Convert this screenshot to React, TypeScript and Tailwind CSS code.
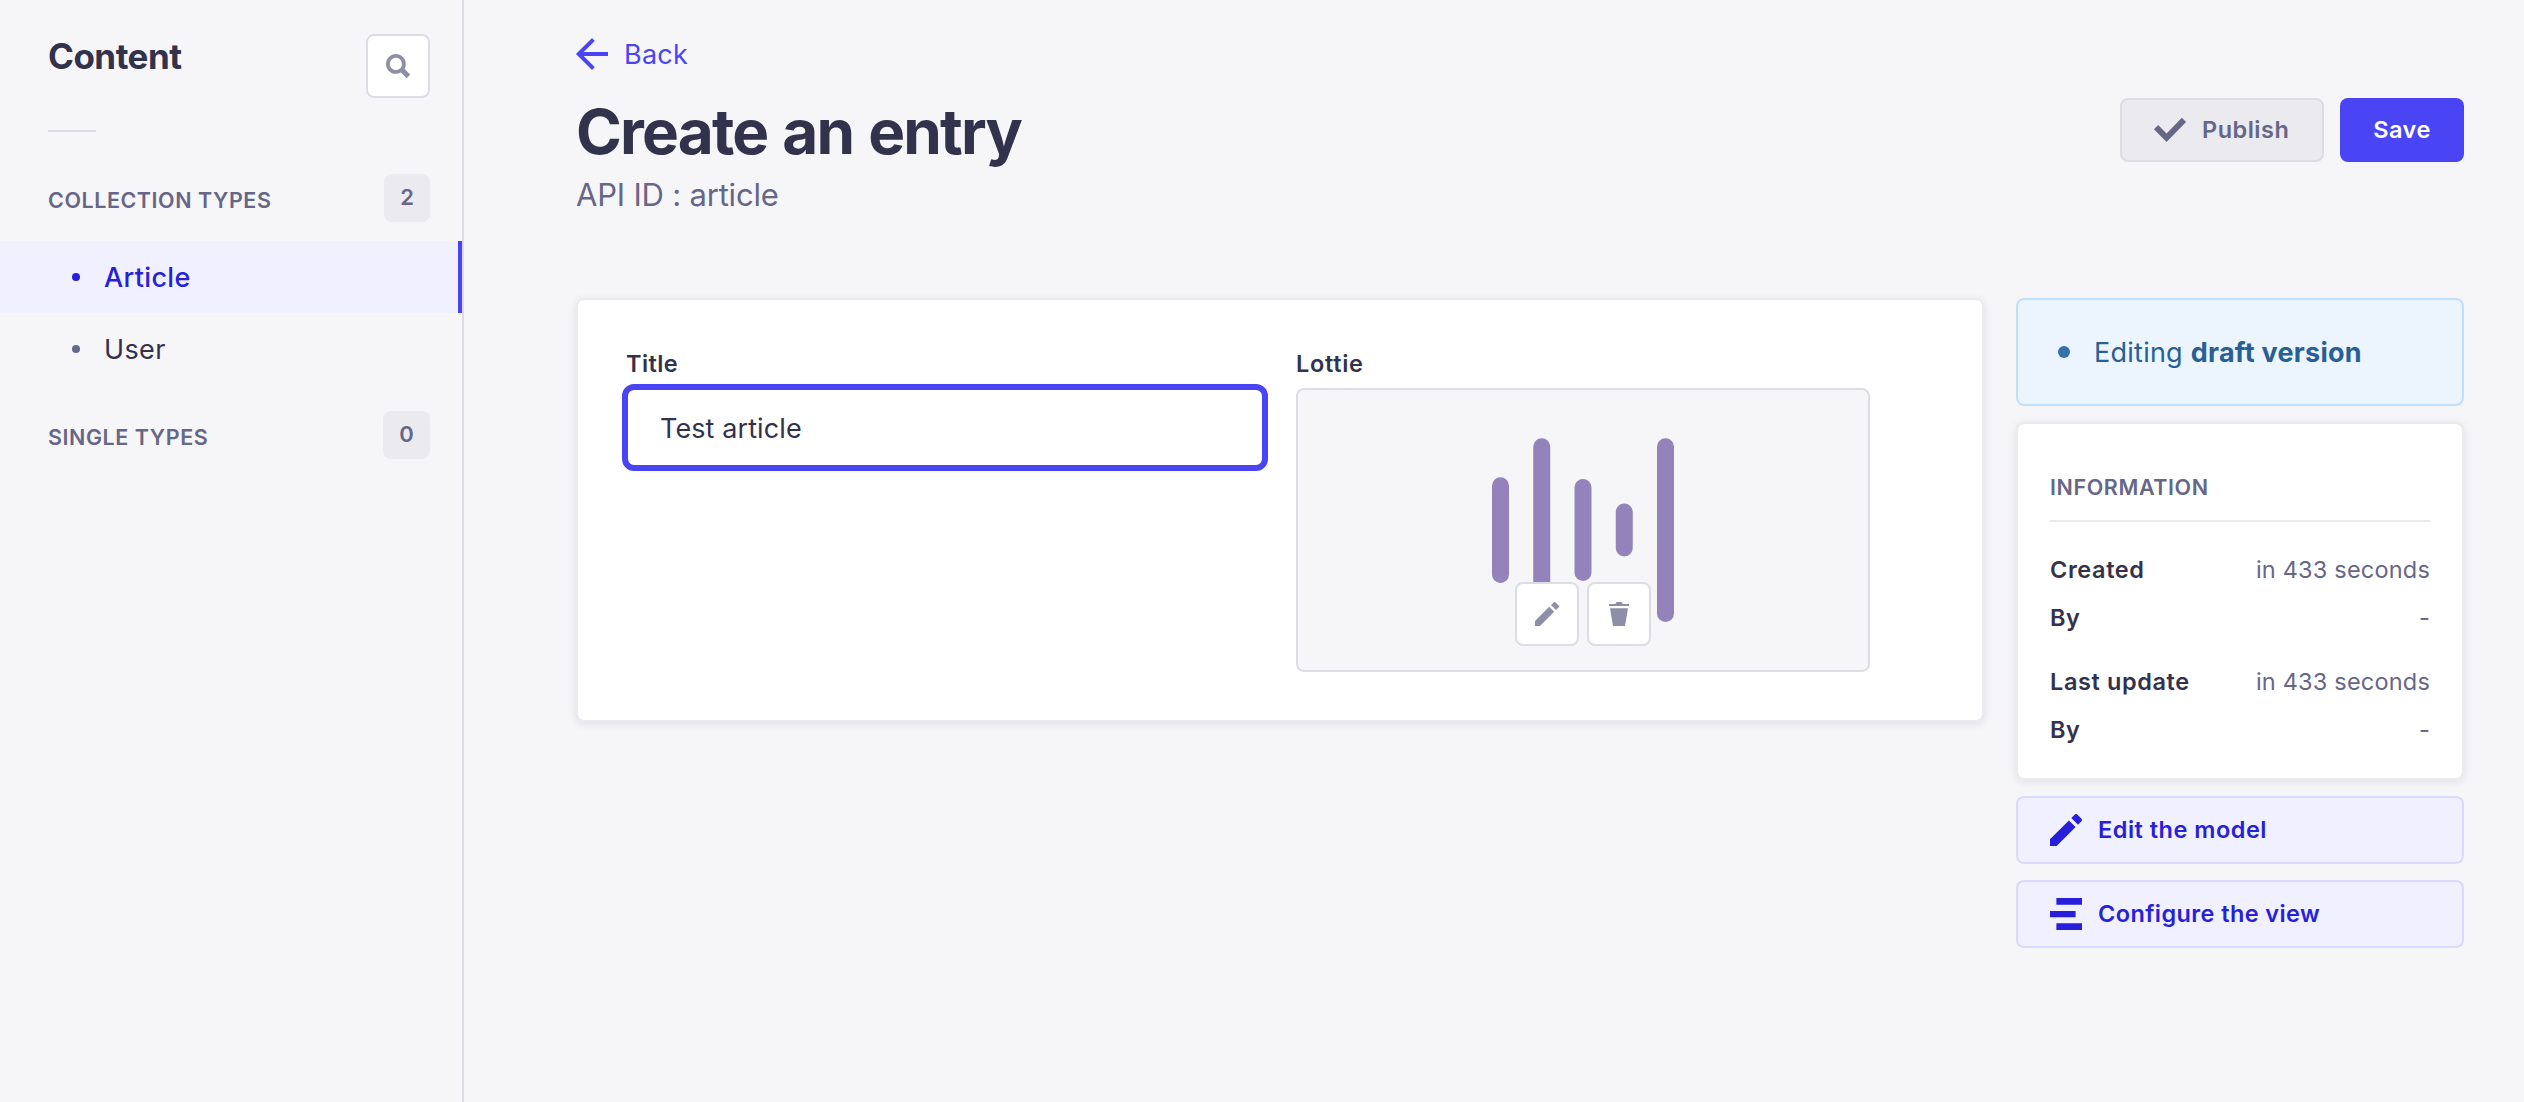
const PENCIL =
  "M23.604 3.514c.528.528.528 1.36 0 1.887l-2.622 2.607-4.99-4.99L18.6.396a1.322 1.322 0 011.887 0l3.118 3.118zM0 24v-4.99l14.2-14.2 4.99 4.99L4.99 24H0z";
const TRASH =
  "M3.236 6.149a.2.2 0 00-.197.233L6 24h12l2.96-17.618a.2.2 0 00-.196-.233H3.236zM21.8 1.983c.11 0 .2.09.2.2v1.584a.2.2 0 01-.2.2H2.2a.2.2 0 01-.2-.2V2.183c0-.11.09-.2.2-.2h5.511c.9 0 1.631-1.09 1.631-1.983h5.316c0 .894.73 1.983 1.631 1.983H21.8z";
const CHECK =
  "M20.727 2.97a.2.2 0 01.286 0l2.85 2.89a.2.2 0 010 .28L9.554 20.854a.2.2 0 01-.285 0l-9.13-9.243a.2.2 0 010-.281l2.85-2.892a.2.2 0 01.284 0l6.14 6.209L20.726 2.97z";
const SEARCH =
  "M23.813 20.163l-5.3-5.367a9.792 9.792 0 001.312-4.867C19.825 4.455 15.375 0 9.913 0 4.45 0 0 4.455 0 9.929c0 5.473 4.45 9.928 9.912 9.928a9.757 9.757 0 005.007-1.4l5.275 5.35a.634.634 0 00.913 0l2.706-2.737a.641.641 0 000-.907zM9.91 3.867c3.338 0 6.05 2.718 6.05 6.061s-2.712 6.061-6.05 6.061c-3.337 0-6.05-2.718-6.05-6.06 0-3.344 2.713-6.062 6.05-6.062z";
const ARROW_LEFT =
  "M24 13.3a.2.2 0 01-.2.2H5.74l8.239 8.239a.2.2 0 010 .282L12.14 23.86a.2.2 0 01-.282 0L.14 12.14a.2.2 0 010-.282L11.86.14a.2.2 0 01.282 0L13.98 1.98a.2.2 0 010 .282L5.74 10.5H23.8c.11 0 .2.09.2.2v2.6z";
const LAYOUT = "M4.8 0H24v5H4.8zM0 9.7h19.2v4.8H0zM4.8 19H24v5H4.8z";

function Icon({ path, className }: { path: string; className: string }) {
  return (
    <svg viewBox="0 0 24 24" fill="currentColor" className={`shrink-0 ${className}`} aria-hidden="true">
      <path d={path} />
    </svg>
  );
}

function IconButton({ path, label }: { path: string; label: string }) {
  return (
    <button
      aria-label={label}
      className="flex size-16 items-center justify-center rounded-lg border-2 border-[#dcdce4] bg-white text-[#8e8ea9]"
    >
      <Icon path={path} className="size-6" />
    </button>
  );
}

function SectionHeader({ label, count, width }: { label: string; count: number; width: string }) {
  return (
    <div className="flex h-12 items-center justify-between pr-8 pl-12 font-semibold text-[#666687]">
      <h3 className="pt-1 text-[21.5px] leading-8 tracking-[0.55px]">{label}</h3>
      <span className={`flex h-12 items-center justify-center rounded-lg bg-[#eaeaef] pb-0.5 text-[22px] ${width}`}>
        {count}
      </span>
    </div>
  );
}

function Sidebar() {
  return (
    <nav className="flex w-[464px] shrink-0 flex-col border-r-2 border-[#dcdce4]">
      <div className="flex h-[98px] items-start justify-between pt-[34px] pr-8 pl-12">
        <h2 className="text-[35px] leading-[44px] font-bold tracking-[-0.5px]">Content</h2>
        <IconButton path={SEARCH} label="Search" />
      </div>
      <div className="mt-8 ml-12 h-0.5 w-12 bg-[#dcdce4]" />
      <div className="mt-[42px]">
        <SectionHeader label="COLLECTION TYPES" count={2} width="w-[46px]" />
      </div>
      <ul className="mt-[19px] text-[27px] leading-10 tracking-[0.35px]">
        <li className="flex h-[72px] items-center border-r-4 border-[#4945f5] bg-[#f0f0ff] pl-[72px] font-medium text-[#271fda]">
          <span className="mr-6 size-2 rounded-full bg-[#271fda]" />
          <span className="pt-px">Article</span>
        </li>
        <li className="flex h-[72px] items-center pl-[72px]">
          <span className="mr-6 size-2 rounded-full bg-[#666687]" />
          <span className="pt-px">User</span>
        </li>
      </ul>
      <div className="mt-[26px]">
        <SectionHeader label="SINGLE TYPES" count={0} width="w-[47px]" />
      </div>
    </nav>
  );
}

function Header() {
  return (
    <header className="flex flex-col">
      <a className="flex h-8 items-center gap-4 text-[27px] leading-8 tracking-[0.25px] text-[#4945f5]">
        <Icon path={ARROW_LEFT} className="size-8" />
        <span className="pt-px">Back</span>
      </a>
      <div className="mt-[22px] flex h-[79px] items-start justify-between">
        <h1 className="text-[62px] leading-[79px] font-bold tracking-[-1.8px] [word-spacing:2px]">
          Create an entry
        </h1>
        <div className="mt-1.5 flex gap-4 text-[23.5px] leading-9 font-semibold tracking-[0.5px]">
          <button className="flex h-16 w-[204px] items-center gap-4 rounded-lg border-2 border-[#dcdce4] bg-[#eaeaef] pl-8 text-[#666687]">
            <Icon path={CHECK} className="size-8" />
            <span className="pb-px">Publish</span>
          </button>
          <button className="flex h-16 w-[124px] items-center justify-center rounded-lg bg-[#4945f5] text-white">
            <span className="pb-px">Save</span>
          </button>
        </div>
      </div>
      <p className="text-[31px] leading-[47px] tracking-[-0.2px] text-[#666687]">API ID : article</p>
    </header>
  );
}

const WAVE = [
  { x: 0, top: 39.3, height: 105.7 },
  { x: 41.25, top: 0.2, height: 183.8 },
  { x: 82.5, top: 41, height: 102 },
  { x: 123.75, top: 65.5, height: 53 },
  { x: 165, top: 0.2, height: 183.8 },
];

function LottiePreview() {
  return (
    <div className="relative flex h-[284px] w-[574px] justify-center rounded-lg border-2 border-[#dcdce4] bg-[#f6f6f9] pt-12">
      <svg width="182" height="184" viewBox="0 0 182 184" className="text-[#9383ba]" aria-hidden="true">
        {WAVE.map((bar) => (
          <rect key={bar.x} x={bar.x} y={bar.top} width="17" height={bar.height} rx="8.5" fill="currentColor" />
        ))}
      </svg>
      <div className="absolute inset-x-0 bottom-6 flex justify-center gap-2">
        <IconButton path={PENCIL} label="Edit" />
        <IconButton path={TRASH} label="Delete" />
      </div>
    </div>
  );
}

function EntryForm() {
  return (
    <section className="flex h-[424px] w-[1408px] rounded-lg border-2 border-[#eaeaef] bg-white pt-12 pl-12 shadow-[0_2px_8px_rgba(33,33,52,0.1)]">
      <div className="w-[670px]">
        <label className="block h-[38px] text-[23.5px] leading-[31px] font-semibold tracking-[0.4px]">Title</label>
        <div className="-mt-0.5 -ml-1 flex h-[87px] w-[646px] items-center rounded-xl border-6 border-[#4945f5] bg-white pl-8 text-[27px] leading-10 tracking-[0.1px]">
          <span className="pt-0.5">Test article</span>
        </div>
      </div>
      <div>
        <label className="block h-10 text-[23.5px] leading-[31px] font-semibold tracking-[0.7px]">Lottie</label>
        <LottiePreview />
      </div>
    </section>
  );
}

function InfoRow({ label, value }: { label: string; value: string }) {
  return (
    <div className="flex h-8 items-start justify-between text-[23.5px] leading-[31px]">
      <dt className="font-semibold tracking-[0.6px]">{label}</dt>
      <dd className="tracking-[0.2px] text-[#666687]">{value}</dd>
    </div>
  );
}

function AsideLink({ path, label, tracking }: { path: string; label: string; tracking: string }) {
  return (
    <a
      className={`flex h-[68px] items-center gap-4 rounded-lg border-2 border-[#d9d8ff] bg-[#f0f0ff] pl-8 text-[23.5px] leading-9 font-semibold text-[#271fda] ${tracking}`}
    >
      <Icon path={path} className="size-8" />
      <span className="pb-px">{label}</span>
    </a>
  );
}

function Aside() {
  return (
    <aside className="flex w-[448px] flex-col gap-4">
      <div className="flex h-[108px] items-center gap-6 rounded-lg border-2 border-[#bfe0fb] bg-[#ecf4fe] pl-10 text-[27px] leading-10 tracking-[0.25px] text-[#285f95]">
        <span className="size-3 rounded-full bg-[#3273ab]" />
        <span className="pt-px">
          Editing <b className="font-bold">draft version</b>
        </span>
      </div>
      <section className="h-[358px] rounded-lg border-2 border-[#eaeaef] bg-white px-8 pt-[47px] shadow-[0_2px_8px_rgba(33,33,52,0.1)]">
        <h3 className="text-[21.5px] leading-8 font-semibold tracking-[0.6px] text-[#666687]">INFORMATION</h3>
        <div className="mt-[17px] h-0.5 bg-[#eaeaef]" />
        <dl className="mt-8 flex flex-col gap-4">
          <InfoRow label="Created" value="in 433 seconds" />
          <InfoRow label="By" value="-" />
          <div className="mt-4">
            <InfoRow label="Last update" value="in 433 seconds" />
          </div>
          <InfoRow label="By" value="-" />
        </dl>
      </section>
      <AsideLink path={PENCIL} label="Edit the model" tracking="tracking-[0.5px]" />
      <AsideLink path={LAYOUT} label="Configure the view" tracking="tracking-[0.4px]" />
    </aside>
  );
}

export default function App() {
  return (
    <div className="flex h-[1102px] w-[2524px] overflow-hidden bg-[#f6f6f9] font-['Inter',sans-serif] text-[#32324d]">
      <Sidebar />
      <main className="flex grow flex-col pt-[38px] pr-[60px] pl-28">
        <Header />
        <div className="mt-20 flex justify-between">
          <EntryForm />
          <Aside />
        </div>
      </main>
    </div>
  );
}
